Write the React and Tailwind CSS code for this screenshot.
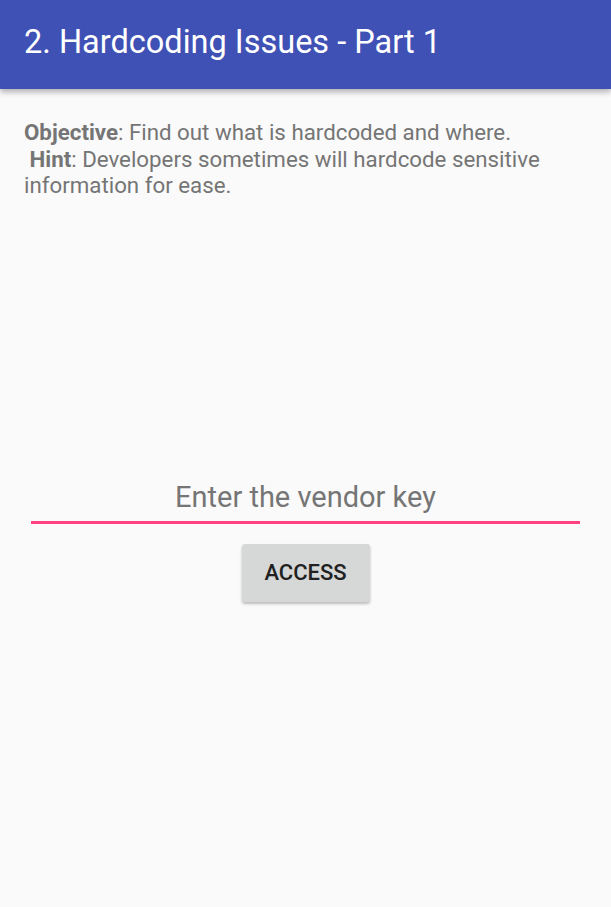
import React, { useState } from 'react';

export default function App() {
  const [key, setKey] = useState('');

  return (
    <div className="w-[611px] h-[907px] bg-[#fafafa] font-['Roboto',sans-serif] overflow-hidden">
      <header className="h-[89px] bg-[#3f51b5] flex items-center px-6 shadow-[0_3px_6px_rgba(0,0,0,0.3)] relative">
        <h1 className="text-white text-[32.5px] leading-none pb-1">2. Hardcoding Issues - Part 1</h1>
      </header>

      <div className="px-6 pt-[30px] text-[22.3px] leading-[26.5px] text-[#757575]">
        <p>
          <span className="font-bold">Objective</span>: Find out what is hardcoded and where.
        </p>
        <p>
          {'\u00a0'}<span className="font-bold">Hint</span>: Developers sometimes will hardcode sensitive information for ease.
        </p>
      </div>

      <div className="mt-[279px] px-[31px] flex flex-col items-center">
        <input
          value={key}
          onChange={e => setKey(e.target.value)}
          placeholder="Enter the vendor key"
          className="w-full h-[46px] text-center text-[29px] text-[#212121] placeholder:text-[#757575] bg-transparent outline-none border-b-[3px] border-[#ff4081] pb-1"
        />
        <button className="mt-[20px] w-[128px] h-[58px] bg-[#d6d7d7] rounded-[3px] shadow-[0_2px_3px_rgba(0,0,0,0.25)] text-[22px] font-medium text-[#212121]">
          ACCESS
        </button>
      </div>
    </div>
  );
}
